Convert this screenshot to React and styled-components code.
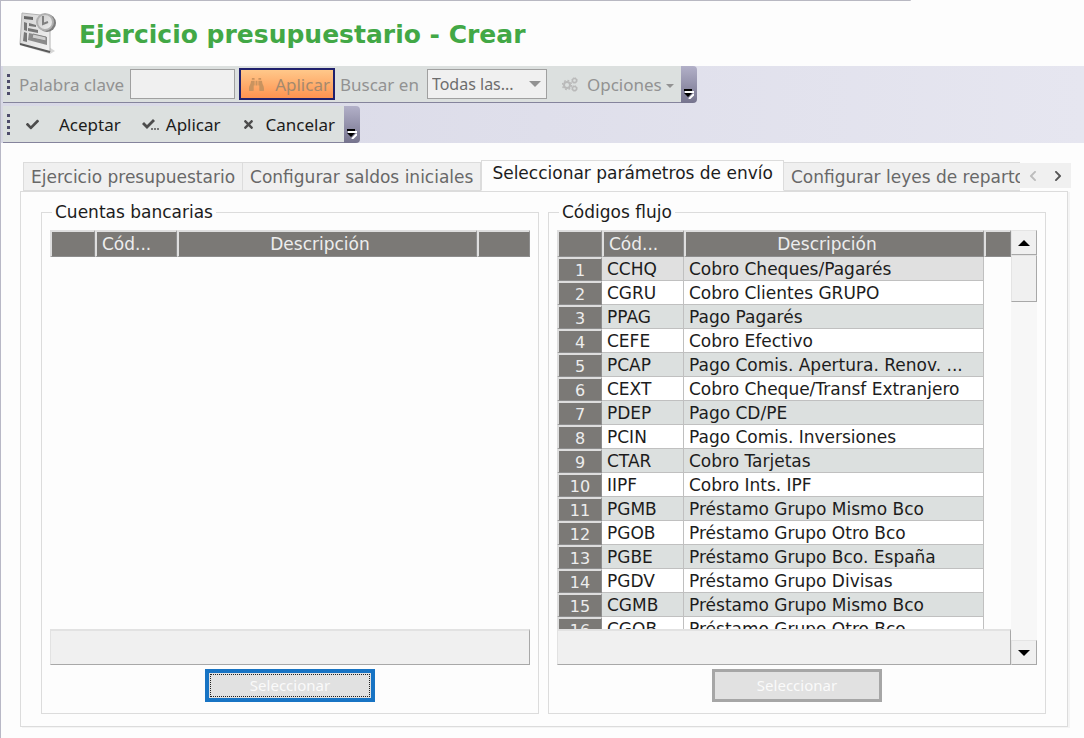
import React, { useState } from 'react';
import styled, { createGlobalStyle, css } from 'styled-components';
import { FaBinoculars, FaCheck, FaTimes, FaChevronLeft, FaChevronRight } from 'react-icons/fa';

const GlobalStyle = createGlobalStyle`
* {
  box-sizing:border-box;
}

body {
  margin:0;
  background:#fdfdfd;
  color:#1c1c1c;
  font-family:"DejaVu Sans", Verdana, sans-serif;
  font-size:17px;
}

button, input, select {
  font:inherit;
}
`

const Window = styled.div`
min-height:100vh;
padding-bottom:10px;
border-left:1px solid #b8b8c6;
background:linear-gradient(#b8b8c2, #b8b8c2) no-repeat top left / 84% 1px #fdfdfd;
`

const Header = styled.header`
display:flex;
align-items:center;
gap:23px;
height:66px;
padding-left:18px;

h1 {
  margin:0;
  padding-top:4px;
  color:#42a846;
  font-size:25px;
  line-height:30px;
  white-space:nowrap;
}
`

const ToolbarArea = styled.div`
display:flex;
flex-direction:column;
gap:3px;
padding-left:2px;
background:linear-gradient(90deg, #d8d8e6, #e6e6f0);
`

const Toolbar = styled.div`
display:flex;
width:fit-content;
height:37px;
font-family:"Noto Sans", "Segoe UI", sans-serif;
`

const ToolbarBody = styled.div`
display:flex;
align-items:center;
padding-left:4px;
background:#dce0df;
border-bottom:1px solid #85849c;
color:${props => props.$disabled ? '#929292' : '#1c1c1c'};

label {
  white-space:nowrap;
}
`

const Grip = styled.span`
width:3px;
height:21px;
margin-right:9px;
background:repeating-linear-gradient(#4e4c6c 0 3px, transparent 3px 6px);
`

const Overflow = styled.button`
display:flex;
align-items:flex-end;
justify-content:center;
width:16px;
padding:0 0 4px;
border:0;
border-radius:0 4px 4px 0;
background:linear-gradient(#b2b0c8, #76748e);
`

const ToolButton = styled.button`
display:flex;
align-items:center;
gap:${props => props.$gap}px;
height:32px;
padding:0 5px;
border:2px solid transparent;
background:none;
color:inherit;
white-space:nowrap;

svg {
  flex:none;
}

${props => props.$hot && css`
  margin-right:5px;
  padding:0 3px 0 8px;
  border-color:#20206c;
  background:linear-gradient(#ffc88a, #ff9350);
  color:#a5896d;

  svg {
    color:#c9935f;
  }
`}
`

const Actions = styled.div`
display:flex;
gap:7px;
padding-right:2px;
`

const KeywordInput = styled.input`
width:105px;
height:30px;
margin:0 4px 0 6px;
border:1px solid #a0a0a0;
background:#f0f0f0;
`

const SelectBox = styled.div`
display:grid;
align-items:center;
width:120px;
height:30px;
margin:0 8px;
border:1px solid #a0a0a0;
background:#f0f0f0;

select, svg {
  grid-area:1 / 1;
}

select {
  width:100%;
  height:28px;
  padding:0 24px 0 4px;
  appearance:none;
  border:0;
  background:none;
  color:#6d6d6d;
  font-size:16px;
  opacity:1;
}

svg {
  justify-self:end;
  margin-right:5px;
}
`

const Caret = styled.span`
display:inline-flex;
vertical-align:middle;
`

const Content = styled.main`
padding:18px 13px 0 19px;
`

const TabRow = styled.div`
display:flex;
align-items:flex-end;
height:30px;
padding-left:3px;
`

const TabList = styled.div`
display:flex;
align-items:flex-end;
flex:1;
min-width:0;
height:31px;
overflow:hidden;
`

const Tab = styled.button`
flex:none;
height:${props => props.$active ? 31 : 29}px;
padding:${props => props.$active ? '0 10px 5px' : '0 7px'};
border:1px solid #dcdcdc;
border-left-width:${props => props.$first || props.$active ? 1 : 0}px;
border-bottom-color:${props => props.$active ? '#fdfdfd' : '#dcdcdc'};
background:${props => props.$active ? '#fdfdfd' : '#f0f0f0'};
color:${props => props.$active ? '#1c1c1c' : '#686868'};
white-space:nowrap;
`

const TabArrows = styled.div`
display:flex;
width:51px;
height:25px;
margin-bottom:3px;
background:#f0f0f0;

button {
  flex:1;
  display:flex;
  align-items:center;
  justify-content:center;
  padding:0;
  border:0;
  background:none;
  color:#555;
}

button:disabled {
  color:#bcbcbc;
}
`

const TabPage = styled.div`
display:flex;
gap:9px;
margin-right:3px;
padding:10px 21px 12px 20px;
border:1px solid #dcdcdc;
box-shadow:2px 1px 0 #f4f4f4;
`

const Group = styled.fieldset`
flex:1;
min-width:0;
margin:0;
padding:8px 8px 11px;
border:1px solid #dcdcdc;

legend {
  margin-left:2px;
  padding:0 3px;
  line-height:20px;
}
`

const GridBox = styled.div`
display:flex;
height:435px;
`

const GridMain = styled.div`
display:flex;
flex-direction:column;
flex:1;
min-width:0;
`

const GridView = styled.div`
flex:1;
min-height:0;
overflow:hidden;
`

const Table = styled.table`
width:100%;
table-layout:fixed;
border-collapse:separate;
border-spacing:0;

th, td {
  padding:0 5px;
  overflow:hidden;
  text-align:left;
  font-weight:400;
  line-height:22px;
  white-space:nowrap;
}

th {
  border:solid;
  border-width:2px 1px 1px 2px;
  border-color:#dedede #8d8d8d #8d8d8d #dedede;
  background:#7b7976;
  color:#ededed;
}

thead th {
  height:27px;
  line-height:24px;
}

thead th:nth-child(3) {
  padding-right:20px;
  text-align:center;
}

tbody th {
  height:24px;
  padding:2px 0 0;
  text-align:center;
  font-size:16px;
  line-height:19px;
}

td {
  height:24px;
  border-right:1px solid #c0c0c0;
  border-bottom:1px solid #c0c0c0;
}

td:last-child {
  border:0;
}
`

const Row = styled.tr`
td:not(:last-child) {
  background:${props => props.$selected ? '#e0e0e0' : props.$odd ? '#dce0df' : '#ffffff'};
}
`

const GridFooter = styled.div`
height:36px;
border:1px solid #a8a8a8;
border-top:2px solid #e2e2e2;
border-left-color:#e2e2e2;
background:#f0f0f0;
`

const ScrollBar = styled.div`
display:flex;
flex-direction:column;
width:26px;
background:#f7f7f7;

button {
  display:flex;
  align-items:center;
  justify-content:center;
  height:25px;
  padding:0;
}

button, span {
  border:1px solid #a8a8a8;
  border-top-color:#e4e4e4;
  border-left-color:#e4e4e4;
  background:#f0f0f0;
  color:#000;
}

span {
  height:47px;
  margin-bottom:auto;
}
`

const SelectButton = styled.button`
display:block;
width:170px;
height:33px;
margin:4px auto 0;
padding:1px;
border:${props => props.$focused ? '4px solid #1874c4' : '3px solid #a6a6a6'};
background:#e1e1e1;
color:#fafafa;
font-family:"Noto Sans", "Segoe UI", sans-serif;
font-size:15px;

span {
  display:block;
  line-height:21px;
  border:1px ${props => props.$focused ? 'dotted #222' : 'solid transparent'};
}
`

const BudgetIcon = () => (
  <svg width="37" height="44" viewBox="0 0 37 44" aria-hidden="true">
    <defs>
      <linearGradient id="sheet" x1="0" y1="0" x2="1" y2="1">
        <stop offset="0" stopColor="#d2d2d2" />
        <stop offset="1" stopColor="#f4f4f4" />
      </linearGradient>
      <linearGradient id="clock" x1="0" y1="0" x2="1" y2="1">
        <stop offset="0" stopColor="#c8c8c8" />
        <stop offset="1" stopColor="#f0f0f0" />
      </linearGradient>
    </defs>
    <path d="M4 35 31 43 36 40 30 36Z" fill="#bdbdbd" opacity="0.6" />
    <path d="M3 2 31 5V41L1 33Z" fill="url(#sheet)" stroke="#b4b4b4" />
    <path d="M1 33 31 41" stroke="#5a5a5a" strokeWidth="2" />
    <path d="M5 5 14 6V9L5 8Z" fill="#666" />
    <path d="M5 11 8 12V20L5 19ZM5 21 8 22V31L4 30ZM10 12 17 14V16L10 15ZM9 17 19 19V22L9 20Z" fill="#777" />
    <path d="M10 22 28 26V34L9 29Z" fill="#8b8b8b" />
    <path d="M14 23 27 26V30L13 27Z" fill="#cfcfcf" stroke="#858585" />
    <circle cx="28" cy="12" r="9" fill="#7d7d7d" />
    <circle cx="26" cy="11" r="8" fill="url(#clock)" stroke="#b0b0b0" strokeWidth="2" />
    <path d="M24 5V13L29 11" fill="none" stroke="#808080" strokeWidth="2" />
  </svg>
)

const Triangle = ({ size, up }) => (
  <svg width={size} height={size / 2} viewBox="0 0 12 6" fill="currentColor" aria-hidden="true">
    <path d={up ? 'M0 6 6 0 12 6Z' : 'M0 0H12L6 6Z'} />
  </svg>
)

const OverflowIcon = () => (
  <svg width="10" height="10" viewBox="0 0 10 10" aria-hidden="true">
    <path d="M1 3H10M10 5 5 10" stroke="#fff" strokeWidth="2" />
    <path d="M0 0H8V2H0ZM0 4H8L4 8Z" fill="#000" />
  </svg>
)

const GearsIcon = () => (
  <svg width="16" height="15" viewBox="0 0 16 15" fill="none" stroke="#bababa" aria-hidden="true">
    <circle cx="5" cy="8" r="3" strokeWidth="2" />
    <circle cx="5" cy="8" r="4.6" strokeWidth="1.4" strokeDasharray="1.8 1.8" />
    <circle cx="12.5" cy="3.5" r="2" strokeWidth="1.4" />
    <circle cx="12.5" cy="3.5" r="2.8" strokeDasharray="1.1 1.1" />
    <circle cx="12.5" cy="11.5" r="2" strokeWidth="1.4" />
    <circle cx="12.5" cy="11.5" r="2.8" strokeDasharray="1.1 1.1" />
  </svg>
)

const CheckDotsIcon = () => (
  <svg width="17" height="13" viewBox="0 0 17 13" fill="#4c4c4c" aria-hidden="true">
    <path d="M0 6 2 4 5 7 11 1 13 3 5 11Z" />
    <path d="M9 10H11V12H9ZM12 10H14V12H12ZM15 10H17V12H15Z" fill="#777" />
  </svg>
)

const tabs = [
  'Ejercicio presupuestario',
  'Configurar saldos iniciales',
  'Seleccionar parámetros de envío',
  'Configurar leyes de reparto',
]

const flowCodes = [
  ['CCHQ', 'Cobro Cheques/Pagarés'],
  ['CGRU', 'Cobro Clientes GRUPO'],
  ['PPAG', 'Pago Pagarés'],
  ['CEFE', 'Cobro Efectivo'],
  ['PCAP', 'Pago Comis. Apertura. Renov. ...'],
  ['CEXT', 'Cobro Cheque/Transf Extranjero'],
  ['PDEP', 'Pago CD/PE'],
  ['PCIN', 'Pago Comis. Inversiones'],
  ['CTAR', 'Cobro Tarjetas'],
  ['IIPF', 'Cobro Ints. IPF'],
  ['PGMB', 'Préstamo Grupo Mismo Bco'],
  ['PGOB', 'Préstamo Grupo Otro Bco'],
  ['PGBE', 'Préstamo Grupo Bco. España'],
  ['PGDV', 'Préstamo Grupo Divisas'],
  ['CGMB', 'Préstamo Grupo Mismo Bco'],
  ['CGOB', 'Préstamo Grupo Otro Bco'],
]

const CodeGrid = ({ rows, scroll }) => (
  <GridBox>
    <GridMain>
      <GridView>
        <Table>
          <colgroup>
            <col width="45" />
            <col width="82" />
            <col width="300" />
            <col />
          </colgroup>
          <thead>
            <tr>
              <th></th>
              <th>Cód...</th>
              <th>Descripción</th>
              <th></th>
            </tr>
          </thead>
          <tbody>
            {rows.map(([code, text], i) => (
              <Row key={code} $selected={i === 0} $odd={i % 2 === 0}>
                <th>{i + 1}</th>
                <td>{code}</td>
                <td>{text}</td>
                <td></td>
              </Row>
            ))}
          </tbody>
        </Table>
      </GridView>
      <GridFooter />
    </GridMain>
    {scroll && (
      <ScrollBar>
        <button aria-label="Subir"><Triangle size={12} up /></button>
        <span />
        <button aria-label="Bajar"><Triangle size={12} /></button>
      </ScrollBar>
    )}
  </GridBox>
)

const App = () => {

  const [active, setActive] = useState(2);

  return (
    <Window>
      <GlobalStyle />
      <Header>
        <BudgetIcon />
        <h1>Ejercicio presupuestario - Crear</h1>
      </Header>

      <ToolbarArea>
        <Toolbar>
          <ToolbarBody $disabled>
            <Grip />
            <label htmlFor="keyword">Palabra clave</label>
            <KeywordInput id="keyword" disabled />
            <ToolButton $hot $gap={11} disabled><FaBinoculars size={15} />Aplicar</ToolButton>
            <label htmlFor="scope">Buscar en</label>
            <SelectBox>
              <select id="scope" disabled>
                <option>Todas las...</option>
              </select>
              <Triangle size={12} />
            </SelectBox>
            <ToolButton $gap={9} disabled>
              <GearsIcon />
              <span>Opciones <Caret><Triangle size={8} /></Caret></span>
            </ToolButton>
          </ToolbarBody>
          <Overflow aria-label="Más"><OverflowIcon /></Overflow>
        </Toolbar>
        <Toolbar>
          <ToolbarBody>
            <Grip />
            <Actions>
              <ToolButton $gap={20}><FaCheck size={13} color="#4c4c4c" />Aceptar</ToolButton>
              <ToolButton $gap={7}><CheckDotsIcon />Aplicar</ToolButton>
              <ToolButton $gap={11}><FaTimes size={13} color="#4c4c4c" />Cancelar</ToolButton>
            </Actions>
          </ToolbarBody>
          <Overflow aria-label="Más"><OverflowIcon /></Overflow>
        </Toolbar>
      </ToolbarArea>

      <Content>
        <TabRow>
          <TabList role="tablist">
            {tabs.map((tab, i) => (
              <Tab
                key={tab}
                role="tab"
                aria-selected={i === active}
                $active={i === active}
                $first={i === 0}
                onClick={() => setActive(i)}
              >
                {tab}
              </Tab>
            ))}
          </TabList>
          <TabArrows>
            <button aria-label="Anterior" disabled><FaChevronLeft size={12} /></button>
            <button aria-label="Siguiente"><FaChevronRight size={12} /></button>
          </TabArrows>
        </TabRow>
        <TabPage>
          <Group>
            <legend>Cuentas bancarias</legend>
            <CodeGrid rows={[]} />
            <SelectButton $focused><span>Seleccionar</span></SelectButton>
          </Group>
          <Group>
            <legend>Códigos flujo</legend>
            <CodeGrid rows={flowCodes} scroll />
            <SelectButton disabled><span>Seleccionar</span></SelectButton>
          </Group>
        </TabPage>
      </Content>
    </Window>
  )
}

export default App;
